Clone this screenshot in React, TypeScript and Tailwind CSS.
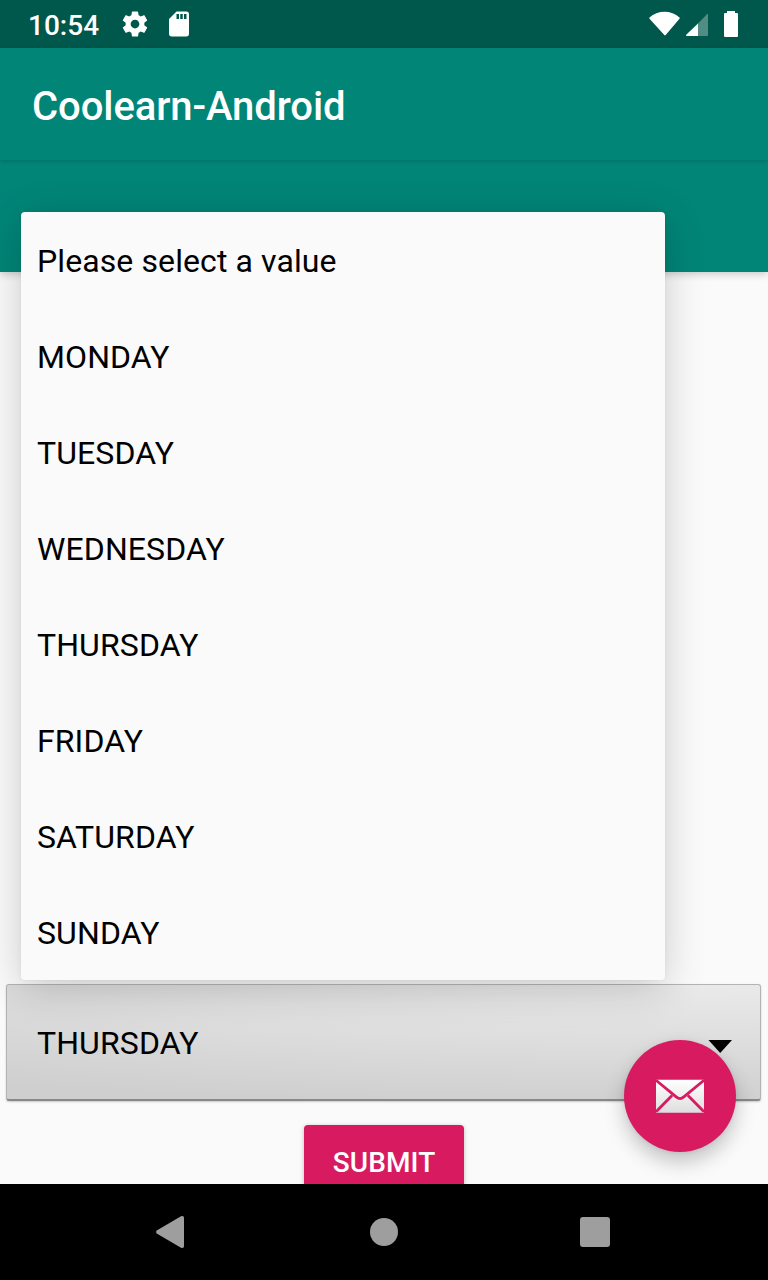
import React from "react";

const options = [
  "Please select a value",
  "MONDAY",
  "TUESDAY",
  "WEDNESDAY",
  "THURSDAY",
  "FRIDAY",
  "SATURDAY",
  "SUNDAY",
];

function StatusBar() {
  return (
    <header className="flex h-12 shrink-0 items-center bg-[#00574b] pl-[28px] pr-[30px] text-white">
      <span className="w-[71px] whitespace-nowrap pt-[4px] text-[28px] leading-8 font-medium">10:54</span>
      <svg className="ml-[21px] size-[30px]" viewBox="0 0 24 24" fill="currentColor">
        <path d="M19.43 12.98c.04-.32.07-.64.07-.98s-.03-.66-.07-.98l2.11-1.65c.19-.15.24-.42.12-.64l-2-3.46c-.12-.22-.39-.3-.61-.22l-2.49 1c-.52-.4-1.08-.73-1.69-.98l-.38-2.65C14.46 2.18 14.25 2 14 2h-4c-.25 0-.46.18-.49.42l-.38 2.65c-.61.25-1.17.59-1.69.98l-2.49-1c-.23-.09-.49 0-.61.22l-2 3.46c-.13.22-.07.49.12.64l2.11 1.65c-.04.32-.07.65-.07.98s.03.66.07.98l-2.11 1.65c-.19.15-.24.42-.12.64l2 3.46c.12.22.39.3.61.22l2.49-1c.52.4 1.08.73 1.69.98l.38 2.65c.03.24.24.42.49.42h4c.25 0 .46-.18.49-.42l.38-2.65c.61-.25 1.17-.59 1.69-.98l2.49 1c.23.09.49 0 .61-.22l2-3.46c.12-.22.07-.49-.12-.64l-2.11-1.65zM12 15.5c-1.93 0-3.5-1.57-3.5-3.5s1.57-3.5 3.5-3.5 3.5 1.57 3.5 3.5-1.57 3.5-3.5 3.5z" />
      </svg>
      <svg className="ml-[14px] size-[30px]" viewBox="0 0 24 24" fill="currentColor">
        <path d="M18 2h-8L4.02 8 4 20c0 1.100.9 2 2 2h12c1.100 0 2-.9 2-2V4c0-1.100-.9-2-2-2zm-6 6h-2V4h2v4zm3 0h-2V4h2v4zm3 0h-2V4h2v4z" />
      </svg>
      <svg className="ml-auto h-[26px] w-[32px]" viewBox="-.5 0 32 26" fill="currentColor">
        <path d="M1 6.500C9-1.200 23-1.200 31 6.500Q31.500 7 31 7.700L17.200 24Q16.500 24.800 15.800 24L1 7.700Q.5 7 1 6.500Z" />
      </svg>
      <svg className="ml-[5px] h-[24px] w-[23px]" viewBox="0 0 23 24">
        <path d="M22 2.300Q23 1.300 23 2.500V23Q23 24 22 24H12V12.500Z" fill="#528d84" />
        <path d="M13 11.500V24H1.700Q.5 23.500 1.200 22.800Z" fill="#fff" />
      </svg>
      <svg className="ml-[16px] h-[26px] w-[14px]" viewBox="0 0 14 26" fill="currentColor">
        <path d="M3 0H11V2H13Q14 2 14 3V25Q14 26 13 26H1Q0 26 0 25V3Q0 2 1 2H3Z" />
      </svg>
    </header>
  );
}

function DayMenu() {
  return (
    <ul
      role="listbox"
      className="absolute left-[21px] top-[212px] z-10 w-[644px] rounded-[4px] bg-[#fafafa] shadow-[0_0_5px_rgba(0,0,0,0.05),0_8px_42px_rgba(0,0,0,0.19)]"
    >
      {options.map((option) => (
        <li key={option} role="option" className="flex h-24 items-center px-4 pt-[1px] text-[32px] tracking-[0.1px]">
          {option}
        </li>
      ))}
    </ul>
  );
}

function MailButton() {
  return (
    <button
      aria-label="Mail"
      className="absolute left-[624px] top-[1040px] z-20 flex size-28 items-center justify-center rounded-full bg-[#d81b60] shadow-[0_10px_20px_rgba(0,0,0,0.22),0_1px_4px_rgba(0,0,0,0.08)]"
    >
      <svg className="h-[34px] w-12" viewBox="0 0 48 34">
        <defs>
          <linearGradient id="paper" x1="0" y1="0" x2="0" y2="1">
            <stop offset="0" stopColor="#fff" />
            <stop offset="1" stopColor="#dedede" />
          </linearGradient>
        </defs>
        <rect width="48" height="33" y=".7" rx=".5" fill="url(#paper)" />
        <path d="M0 1.300 20.500 18.200Q24 21 27.500 18.200L48 1.300M0 32.800 16 16.500M48 32.800 32 16.500" fill="none" stroke="#d81b60" strokeWidth="2.800" />
      </svg>
    </button>
  );
}

export default function App() {
  return (
    <div className="relative flex h-[1280px] w-[768px] flex-col overflow-hidden bg-[#fafafa] font-[Roboto,sans-serif] text-black">
      <StatusBar />
      <div className="z-[2] flex h-28 shrink-0 items-center bg-[#008577] pl-8 pt-[6px] text-[40px] font-medium tracking-[-0.08px] text-white shadow-[0_1px_4px_rgba(0,0,0,0.17)]">
        Coolearn-Android
      </div>
      <div className="z-[1] h-28 shrink-0 bg-[#008577] shadow-[0_2px_8px_rgba(0,0,0,0.2)]" />
      <main className="flex h-[912px] shrink-0 flex-col overflow-hidden pl-[6px] pr-[7px] pt-[712px]">
        <div className="flex h-[117px] shrink-0 items-center justify-between rounded-[3px] border border-b-2 border-[#b4b4b4] border-b-[#888] bg-[radial-gradient(160%_105%_at_90%_0%,#eaeaea,#dddddd_50%,#cfcfcf)] pl-[30px] pr-[28px] shadow-[0_1px_2px_rgba(0,0,0,0.2)]">
          <span className="pt-[1px] text-[32px] tracking-[0.1px]">THURSDAY</span>
          <svg className="mt-[8px] h-[13px] w-6" viewBox="0 0 24 13">
            <path d="M.5 0H24L12.200 13Z" />
          </svg>
        </div>
        <button className="ml-[298px] mt-6 h-24 w-40 shrink-0 rounded-[4px] bg-[#d81b60] pb-[20px] text-[28px] font-medium tracking-[0.1px] text-white shadow-[0_1px_4px_rgba(0,0,0,0.25)]">
          SUBMIT
        </button>
      </main>
      <nav className="z-30 flex h-24 shrink-0 items-center bg-black pl-[155px]">
        <svg className="h-[34px] w-[30px]" viewBox="0 0 30 34" fill="#9e9e9e">
          <path d="M1.700 15.500 26 1.300Q29 .2 29 3V31Q29 33.800 26 32.700L1.700 18.500Q.3 17 1.700 15.500Z" />
        </svg>
        <span className="ml-[185px] size-7 rounded-full bg-[#9e9e9e]" />
        <span className="ml-[182px] size-[30px] rounded-[3px] bg-[#9e9e9e]" />
      </nav>
      <DayMenu />
      <MailButton />
    </div>
  );
}
